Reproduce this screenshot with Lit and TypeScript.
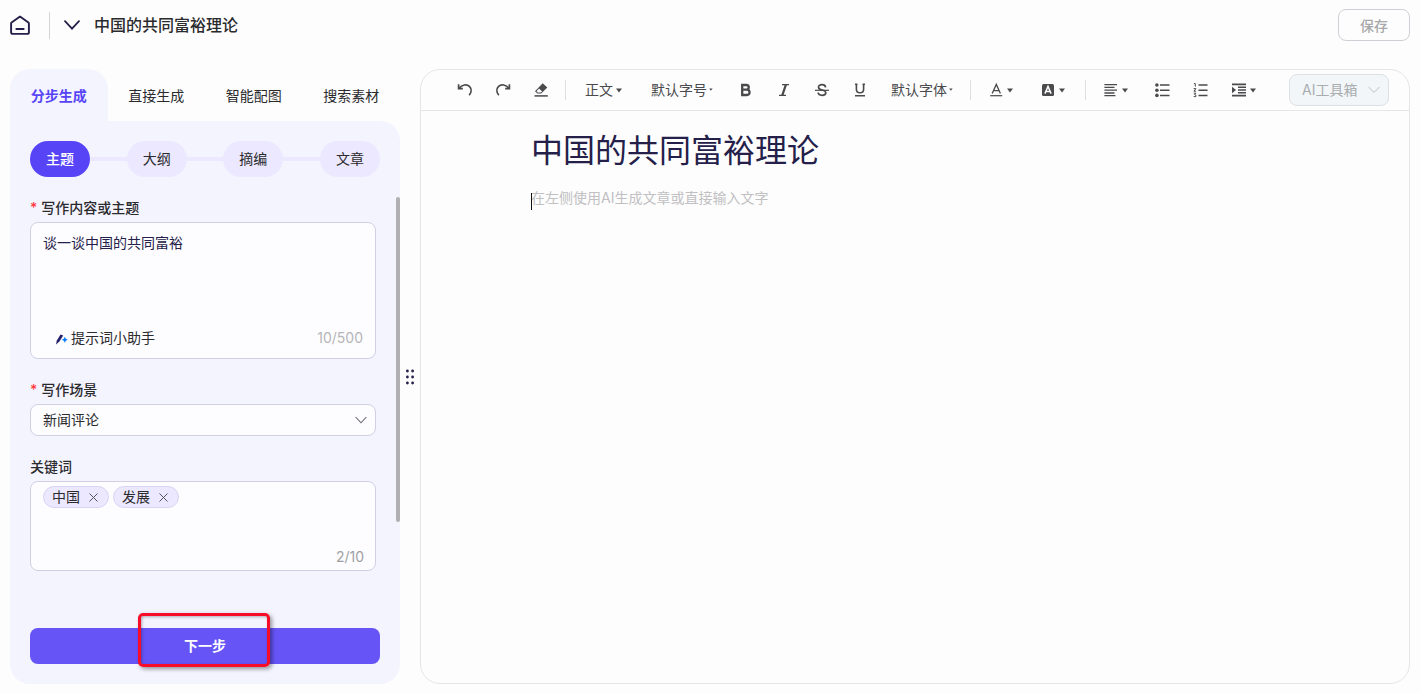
import { LitElement, html, css, svg } from "lit";
import { customElement, property, state } from "lit/decorators.js";
import { classMap } from "lit/directives/class-map.js";

const caret = html`<svg class="caret" viewBox="0 0 6 5" width="6" height="5" aria-hidden="true"><path d="M0 0.5h6L3 4.5z" fill="currentColor"/></svg>`;
const tinyCaret = html`<svg class="caret" viewBox="0 0 4 4" width="4" height="4" aria-hidden="true"><path d="M0.2 0.5h3.4L1.9 2.8z" fill="currentColor"/></svg>`;

const icons: Record<string, unknown> = {
  undo: svg`<path d="M1.6 2.2V6.6H5.8" fill="none" stroke="currentColor" stroke-width="1.7"/><path d="M2.2 6.2C4.8 2.6 9.8 1.8 12.4 4.4C14.8 6.8 14.6 10.4 12.2 13.2" fill="none" stroke="currentColor" stroke-width="1.7"/>`,
  redo: svg`<path d="M14.4 2.2V6.6H10.2" fill="none" stroke="currentColor" stroke-width="1.7"/><path d="M13.8 6.2C11.2 2.6 6.2 1.8 3.6 4.4C1.2 6.8 1.4 10.4 3.8 13.2" fill="none" stroke="currentColor" stroke-width="1.7"/>`,
  eraser: svg`<path d="M9.7 1.2L14.3 5.4L8.2 11.6H4.4L2 9.3Z" fill="currentColor"/><path d="M6 6.6L9.2 9.4L7.6 10.6H4.9L3.5 9.2Z" fill="#fdfdfd"/><path d="M1.5 13.9H14.8" stroke="currentColor" stroke-width="1.5"/>`,
  bold: svg`<path d="M4.2 3H8.4A2.35 2.35 0 0 1 8.4 7.7H4.2ZM4.2 7.7H8.9A2.6 2.6 0 0 1 8.9 13H4.2Z" fill="none" stroke="currentColor" stroke-width="2.3"/>`,
  italic: svg`<path d="M6 2.6H13M3 13.4H10" stroke="currentColor" stroke-width="1.3"/><path d="M9.9 2.6L6.3 13.4" stroke="currentColor" stroke-width="2.2"/>`,
  strike: svg`<path d="M11.6 5.3C11.4 3.6 10 2.7 8 2.7C5.9 2.7 4.5 3.7 4.5 5.2C4.5 6.8 6 7.5 8 8C10.2 8.5 11.8 9.1 11.8 10.8C11.8 12.4 10.3 13.3 8.1 13.3C5.8 13.3 4.3 12.3 4.1 10.5" fill="none" stroke="currentColor" stroke-width="1.7"/><path d="M1 8.3H15" stroke="currentColor" stroke-width="1.2"/>`,
  underline: svg`<path d="M4.4 2V7.2C4.4 9.5 5.8 10.8 8 10.8C10.2 10.8 11.6 9.5 11.6 7.2V2" fill="none" stroke="currentColor" stroke-width="1.6"/><path d="M3 2.2H5.4M10.6 2.2H13M3 13.8H13" stroke="currentColor" stroke-width="1.4"/>`,
  color: svg`<path d="M4.2 11.4L8.3 2.4L12.4 11.4M5.6 8.6H11" fill="none" stroke="currentColor" stroke-width="1.3"/><path d="M2.2 13.7H14.2" stroke="currentColor" stroke-width="1.2"/>`,
  fill: svg`<rect x="2" y="2" width="12" height="12" rx="1.5" fill="currentColor"/><path d="M4.9 11.6L8 4.4L11.1 11.6M5.9 9.6H10.1" fill="none" stroke="#fdfdfd" stroke-width="1.5"/>`,
  align: svg`<path d="M1.4 2.6H14M1.4 5.4H11.5M1.4 8.2H14M1.4 11H11.5M1.4 13.6H12.5" stroke="currentColor" stroke-width="1.3"/>`,
  bullets: svg`<path d="M6 3H15.5M6 8.2H15.5M6 13.4H15.5" stroke="currentColor" stroke-width="1.5"/><circle cx="2.9" cy="3" r="1.8" fill="currentColor"/><circle cx="2.9" cy="8.2" r="1.8" fill="currentColor"/><circle cx="2.9" cy="13.4" r="1.8" fill="currentColor"/>`,
  numbers: svg`<path d="M6.5 3H15.5M6.5 8.2H15.5M6.5 13.4H15.5" stroke="currentColor" stroke-width="1.5"/><path d="M1.9 1.6H3.3V4.6M1.7 6.6H3.9L1.9 9.2H4.1M1.7 11.2H3.9L2.7 12.6L3.9 13.2V14.6H1.7" fill="none" stroke="currentColor" stroke-width="1"/>`,
  indent: svg`<path d="M1 2.4H15M7 5.2H15M7 8H15M7 10.8H15M1 13.6H15" stroke="currentColor" stroke-width="1.6"/><path d="M1 4.8L5 8L1 11.2Z" fill="currentColor"/>`,
};

const glyph = (name: string) =>
  html`<svg viewBox="0 0 16 16" width="16" height="16" aria-hidden="true">${icons[name]}</svg>`;

const reset = css`
  :host { box-sizing: border-box; font-family: Inter, "Noto Sans CJK SC", sans-serif; }
  *, *::before { box-sizing: border-box; }
  button, input, textarea, select { font: inherit; color: inherit; margin: 0; padding: 0; border: 0; background: none; outline: none; }
  button { cursor: pointer; }
  svg { display: block; flex: none; }
`;

@customElement("writer-panel")
export class WriterPanel extends LitElement {
  static styles = [reset, css`
    :host { display: flex; flex-direction: column; color: #2b2b2e; font-size: 14px; line-height: 20px; }
    .tabs { display: grid; grid-template-columns: repeat(4, 1fr); height: 52px; flex: none; }
    .tab { border-radius: 20px 20px 0 0; padding-top: 2px; }
    .tab.on { background: #f4f4ff; color: #5744f7; font-weight: 700; }
    .body { flex: 1; display: flex; flex-direction: column; background: #f4f4ff; border-radius: 0 20px 20px 20px; padding: 20px 0; }
    .steps { display: flex; align-items: center; padding: 0 20px; margin-bottom: 20px; }
    .step { width: 60px; height: 36px; border-radius: 18px; background: #ebe8ff; }
    .step.on { background: #5744f7; color: #fff; font-weight: 500; }
    .link { flex: 1; height: 4px; background: #ebe8ff; }
    .scroll { flex: 1; display: flex; }
    .form { flex: 1; padding: 0 20px; display: flex; flex-direction: column; }
    .label { display: block; height: 24px; margin-bottom: 1px; line-height: 22px; font-weight: 500; }
    .req::before { content: "*"; color: #ff3b3f; margin-right: 4px; }
    .box { background: #fdfdff; border: 1px solid #d0d0e2; border-radius: 8px; }
    .topic { height: 137px; display: flex; flex-direction: column; padding: 10px 12px; margin-bottom: 20px; }
    .topic textarea { flex: 1; width: 100%; resize: none; color: #242049; line-height: 20px; }
    .foot { display: flex; justify-content: space-between; align-items: center; }
    .helper { display: flex; align-items: center; gap: 3px; margin-left: 12px; }
    .count { color: #b5b5b8; }
    .pick { display: grid; height: 32px; align-items: center; margin-bottom: 20px; }
    .pick select, .pick svg { grid-area: 1 / 1; }
    .pick select { appearance: none; width: 100%; height: 30px; padding: 0 12px; }
    .pick svg { justify-self: end; margin-right: 8px; pointer-events: none; }
    .tags { height: 90px; padding: 4px 11px 2px 12px; display: flex; flex-direction: column; justify-content: space-between; }
    .list { display: flex; gap: 4px; }
    .tag { display: flex; align-items: center; gap: 9px; height: 22px; padding: 0 10px 0 8px; background: #ebe8ff; border: 1px solid #d8d4f2; border-radius: 11px; }
    .tags .count { align-self: flex-end; color: #a0a0a4; line-height: 22px; }
    .thumb { width: 4px; height: 325px; border-radius: 2px; background: #b0b0b2; }
    .action { position: relative; margin: 0 20px; }
    .next { width: 100%; height: 36px; border-radius: 8px; background: #6654f7; color: #fff; font-weight: 700; display: block; }
    .mark { position: absolute; left: 108px; top: -15px; width: 132px; height: 54px; border: 3px solid #f80c28; border-radius: 5px; box-shadow: 2px 2px 4px rgba(0, 0, 0, 0.4), inset 1px 1px 3px rgba(0, 0, 0, 0.3); pointer-events: none; }
  `];

  @state() private tab = 0;
  @state() private tags = ["中国", "发展"];
  @state() private topic = "谈一谈中国的共同富裕";

  render() {
    return html`
      <div class="tabs" role="tablist">
        ${["分步生成", "直接生成", "智能配图", "搜索素材"].map((t, i) => html`
          <button role="tab" aria-selected=${i === this.tab} class=${classMap({ tab: true, on: i === this.tab })} @click=${() => (this.tab = i)}>${t}</button>`)}
      </div>
      <div class="body">
        <div class="steps">
          ${["主题", "大纲", "摘编", "文章"].map((s, i) => html`
            ${i ? html`<span class="link"></span>` : ""}
            <button class=${classMap({ step: true, on: i === 0 })}>${s}</button>`)}
        </div>
        <div class="scroll">
          <form class="form">
            <label class="label req" for="topic">写作内容或主题</label>
            <div class="box topic">
              <textarea id="topic" .value=${this.topic} @input=${(e: Event) => (this.topic = (e.target as HTMLTextAreaElement).value)}></textarea>
              <div class="foot">
                <button type="button" class="helper">
                  <svg viewBox="0 0 13 14" width="13" height="14" aria-hidden="true"><path d="M1 13.4L1.8 9.4L5.6 3.4L8.2 4.6L4.4 10.4Z" fill="#242069"/><path d="M9.8 5.8L10.8 7.8L12.8 8.8L10.8 9.8L9.8 11.8L8.8 9.8L6.8 8.8L8.8 7.8Z" fill="#0a7cff"/></svg>
                  提示词小助手
                </button>
                <span class="count">${this.topic.length}/500</span>
              </div>
            </div>
            <label class="label req" for="scene">写作场景</label>
            <div class="box pick">
              <select id="scene"><option>新闻评论</option></select>
              <svg viewBox="0 0 12 8" width="12" height="8" aria-hidden="true"><path d="M0.6 1L6 6.8L11.4 1" fill="none" stroke="#66666e" stroke-width="1.1"/></svg>
            </div>
            <span class="label">关键词</span>
            <div class="box tags">
              <div class="list">
                ${this.tags.map((t) => html`<span class="tag">${t}<button type="button" aria-label="×" @click=${() => (this.tags = this.tags.filter((x) => x !== t))}><svg viewBox="0 0 9 9" width="9" height="9"><path d="M0.5 0.5L8.5 8.5M8.5 0.5L0.5 8.5" stroke="#55555e" stroke-width="1"/></svg></button></span>`)}
              </div>
              <span class="count">${this.tags.length}/10</span>
            </div>
          </form>
          <div class="thumb"></div>
        </div>
        <div class="action"><button class="next">下一步</button><span class="mark"></span></div>
      </div>`;
  }
}

@customElement("doc-editor")
export class DocEditor extends LitElement {
  static styles = [reset, css`
    :host { display: flex; flex-direction: column; border: 1px solid #e6e6e8; border-radius: 20px; background: #fdfdfd; color: #4a4a4c; font-size: 14px; line-height: 20px; }
    .bar { display: flex; align-items: center; height: 41px; padding: 0 20px 0 25px; border-bottom: 1px solid #e6e6e8; flex: none; }
    .tool { width: 38px; height: 32px; display: flex; align-items: center; justify-content: center; flex: none; }
    .menu { display: flex; align-items: center; gap: 3px; height: 32px; padding: 0 15px 0 12px; flex: none; }
    .text { padding: 0 14px; }
    .font { padding: 0 12px; }
    .font, .size { gap: 2px; }
    .size { padding: 0 14px 0 15px; }
    .sep { width: 1px; height: 20px; background: #dedee0; margin: 0 5px; flex: none; }
    .ai { margin-left: auto; width: 100px; height: 32px; display: flex; align-items: center; justify-content: space-between; padding: 0 8px 0 12px; background: #f2f6f8; border: 1px solid #dbe1e4; border-radius: 8px; color: #a9adb0; white-space: nowrap; }
    .doc { flex: 1; display: flex; flex-direction: column; padding: 16px 110px; }
    .title { margin: 0 0 12px; font-size: 32px; line-height: 48px; font-weight: 400; color: #242049; }
    .area { flex: 1; position: relative; display: flex; }
    .area textarea { flex: 1; resize: none; line-height: 22px; }
    .area textarea::placeholder { color: #c0c0c2; opacity: 1; }
    .cursor { position: absolute; left: 0; top: 6px; width: 1px; height: 17px; background: #111; }
  `];

  @property() heading = "";

  private tool(name: string) {
    return html`<button class="tool" aria-label=${name}>${glyph(name)}</button>`;
  }
  private menu(name: string) {
    return html`<button class="menu" aria-label=${name}>${glyph(name)}${caret}</button>`;
  }

  render() {
    return html`
      <div class="bar" role="toolbar">
        ${["undo", "redo", "eraser"].map((n) => this.tool(n))}
        <span class="sep"></span>
        <button class="menu text">正文${caret}</button>
        <button class="menu size">默认字号${tinyCaret}</button>
        ${["bold", "italic", "strike", "underline"].map((n) => this.tool(n))}
        <button class="menu font">默认字体${tinyCaret}</button>
        <span class="sep"></span>
        ${this.menu("color")}${this.menu("fill")}
        <span class="sep"></span>
        ${this.menu("align")}${this.tool("bullets")}${this.tool("numbers")}${this.menu("indent")}
        <button class="ai" disabled>AI工具箱<svg viewBox="0 0 12 8" width="12" height="8"><path d="M0.6 1L6 6.4L11.4 1" fill="none" stroke="#b9bdc0" stroke-width="1"/></svg></button>
      </div>
      <div class="doc">
        <h1 class="title">${this.heading}</h1>
        <div class="area">
          <textarea aria-label=${this.heading} placeholder="在左侧使用AI生成文章或直接输入文字"></textarea>
          <span class="cursor"></span>
        </div>
      </div>`;
  }
}

@customElement("app-root")
export class AppRoot extends LitElement {
  static styles = [reset, css`
    :host { display: flex; flex-direction: column; min-height: 100vh; padding: 0 11px 9px 10px; background: #fdfdfd; }
    .head { display: flex; align-items: center; height: 50px; margin-bottom: 19px; flex: none; }
    .rule { width: 1px; height: 27px; background: #d4d4d8; margin: 0 14px 0 19px; }
    .name { flex: 1; margin: 0 0 0 14px; font-size: 16px; line-height: 24px; font-weight: 500; color: #2b2b2e; }
    .save { width: 72px; height: 32px; border: 1px solid #cfcfd6; border-radius: 8px; font-size: 14px; font-weight: 500; color: #a8a8aa; }
    .main { flex: 1; display: flex; }
    .side { width: 390px; flex: none; }
    .grip { width: 20px; display: flex; align-items: center; justify-content: center; flex: none; }
    .edit { flex: 1; min-width: 0; }
  `];

  render() {
    const title = "中国的共同富裕理论";
    return html`
      <header class="head">
        <button aria-label="home"><svg viewBox="0 0 20 20" width="20" height="20"><path d="M10 1.6L18.4 7.6Q18.9 8 18.9 8.7V17.2Q18.9 18.9 17.2 18.9H2.8Q1.1 18.9 1.1 17.2V8.7Q1.1 8 1.6 7.6Z" fill="none" stroke="#242049" stroke-width="1.9" stroke-linejoin="round"/><path d="M5.6 14H14.4" stroke="#242049" stroke-width="2"/></svg></button>
        <span class="rule"></span>
        <button aria-label="menu"><svg viewBox="0 0 16 10" width="16" height="10"><path d="M1 1.2L8 8.6L15 1.2" fill="none" stroke="#242049" stroke-width="1.8" stroke-linecap="round"/></svg></button>
        <h2 class="name">${title}</h2>
        <button class="save">保存</button>
      </header>
      <main class="main">
        <writer-panel class="side"></writer-panel>
        <div class="grip"><svg viewBox="0 0 8 16" width="8" height="16">${[2, 8, 14].map((y) => svg`<circle cx="1.4" cy=${y} r="1.4" fill="#242049"/><circle cx="6.6" cy=${y} r="1.4" fill="#242049"/>`)}</svg></div>
        <doc-editor class="edit" heading=${title}></doc-editor>
      </main>`;
  }
}
